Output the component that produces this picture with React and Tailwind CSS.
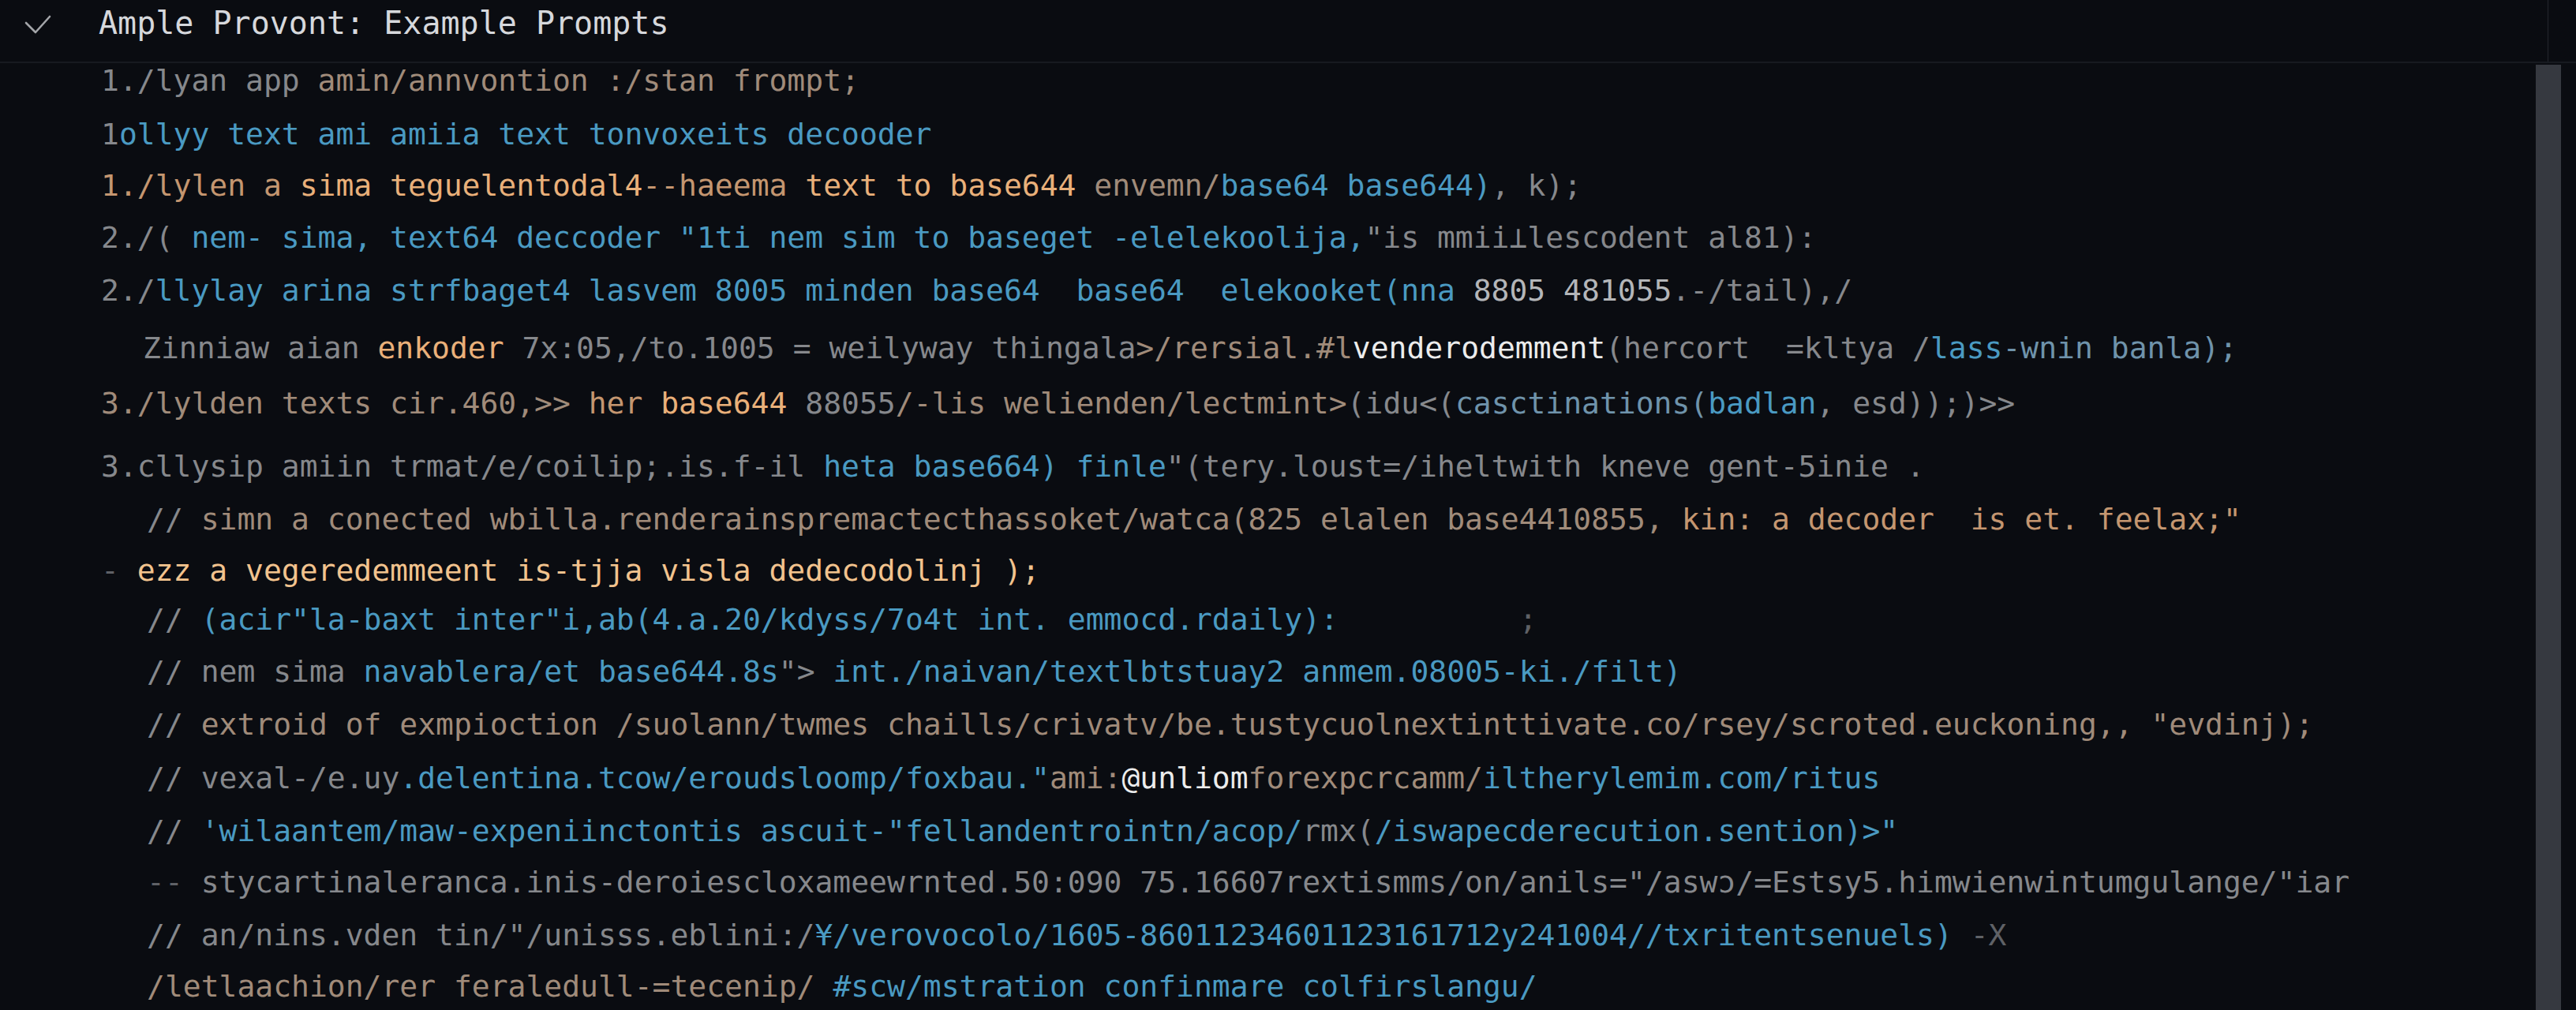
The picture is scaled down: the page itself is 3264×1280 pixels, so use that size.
// Code preview panel: collapsible header + syntax coloured prompt lines
const colors = {
  g: "text-[#86888c]", // gray
  d: "text-[#5f6166]", // dim gray
  t: "text-[#a08b7a]", // tan
  od: "text-[#c49670]", // dim orange
  o: "text-[#e9b07a]", // orange
  p: "text-[#f2c38e]", // peach
  b: "text-[#4a9ac2]", // blue
  m: "text-[#6f93ab]", // muted blue
  l: "text-[#b4b6b9]", // light gray
  w: "text-[#ececec]", // white
};

// each line: left padding, row height (baseline to next baseline), coloured segments
const lines = [
  { pl: "pl-[128px]", h: "h-[68px]", segs: [["g", "1./lyan app "], ["t", "amin/annvontion :/stan frompt;"]] },
  { pl: "pl-[128px]", h: "h-[65px]", segs: [["g", "1"], ["b", "ollyy text ami amiia text tonvoxeits decooder"]] },
  {
    pl: "pl-[128px]",
    h: "h-[66px]",
    segs: [
      ["od", "1./lylen a "],
      ["o", "sima teguelentodal4"],
      ["od", "--haeema "],
      ["o", "text to base644 "],
      ["t", "envemn/"],
      ["b", "base64 base644)"],
      ["g", ", k);"],
    ],
  },
  {
    pl: "pl-[128px]",
    h: "h-[67px]",
    segs: [
      ["g", "2./( "],
      ["b", 'nem- sima, text64 deccoder "1ti nem sim to baseget -elelekoolija,'],
      ["g", '"is mmii⊥lescodent al81):'],
    ],
  },
  {
    pl: "pl-[128px]",
    h: "h-[73px]",
    segs: [
      ["g", "2./"],
      ["b", "llylay arina strfbaget4 lasvem 8005 minden base64  base64  elekooket(nna "],
      ["l", "8805 481055"],
      ["g", ".-/tail),/"],
    ],
  },
  {
    pl: "pl-[181px]",
    h: "h-[70px]",
    segs: [
      ["g", "Zinniaw aian "],
      ["o", "enkoder"],
      ["g", " 7x:05,/to.1005 = weilyway thingala"],
      ["t", ">/rersial.#l"],
      ["w", "venderodemment"],
      ["g", "(hercort  =kltya /"],
      ["b", "lass"],
      ["m", "-wnin banla);"],
    ],
  },
  {
    pl: "pl-[128px]",
    h: "h-[80px]",
    segs: [
      ["t", "3./lylden texts cir.460,>> "],
      ["od", "her "],
      ["o", "base644"],
      ["g", " 88055"],
      ["t", "/-lis welienden/lectmint>"],
      ["g", "(idu<("],
      ["m", "casctinations("],
      ["b", "badlan"],
      ["g", ", esd));)>>"],
    ],
  },
  {
    pl: "pl-[128px]",
    h: "h-[67px]",
    segs: [
      ["g", "3.cllysip amiin trmat/e/coilip;.is.f-il "],
      ["b", "heta base664) finle"],
      ["g", '"(tery.loust=/iheltwith kneve gent-5inie .'],
    ],
  },
  {
    pl: "pl-[186px]",
    h: "h-[65px]",
    segs: [
      ["g", "// "],
      ["t", "simn a conected wbilla.renderainspremactecthassoket/watca(825 elalen base4410855, "],
      ["od", 'kin: a decoder  is et. feelax;"'],
    ],
  },
  { pl: "pl-[128px]", h: "h-[62px]", segs: [["d", "- "], ["p", "ezz a vegeredemmeent is-tjja visla dedecodolinj );"]] },
  {
    pl: "pl-[186px]",
    h: "h-[66px]",
    segs: [
      ["g", "// "],
      ["b", '(acir"la-baxt inter"i,ab(4.a.20/kdyss/7o4t int. emmocd.rdaily):'],
      ["d", "          ;"],
    ],
  },
  {
    pl: "pl-[186px]",
    h: "h-[67px]",
    segs: [
      ["g", "// nem sima "],
      ["b", "navablera/et base644.8s"],
      ["g", '"> '],
      ["b", "int./naivan/textlbtstuay2 anmem.08005-ki./filt)"],
    ],
  },
  {
    pl: "pl-[186px]",
    h: "h-[68px]",
    segs: [
      ["g", "// "],
      ["t", 'extroid of exmpioction /suolann/twmes chaills/crivatv/be.tustycuolnextinttivate.co/rsey/scroted.euckoning,, "evdinj);'],
    ],
  },
  {
    pl: "pl-[186px]",
    h: "h-[67px]",
    segs: [
      ["g", "// vexal-/e.uy"],
      ["b", '.delentina.tcow/eroudsloomp/foxbau."'],
      ["t", "ami:"],
      ["w", "@unliom"],
      ["t", "forexpcrcamm/"],
      ["b", "iltherylemim.com/ritus"],
    ],
  },
  {
    pl: "pl-[186px]",
    h: "h-[65px]",
    segs: [
      ["g", "// "],
      ["b", "'wilaantem/maw-expeniinctontis ascuit-\"fellandentrointn/acop/"],
      ["g", "rmx("],
      ["b", '/iswapecderecution.sention)>"'],
    ],
  },
  {
    pl: "pl-[186px]",
    h: "h-[67px]",
    segs: [
      ["d", "-- "],
      ["g", 'stycartinaleranca.inis-deroiescloxameewrnted.50:090 75.16607rextismms/on/anils="/aswɔ/=Estsy5.himwienwintumgulange/"iar'],
    ],
  },
  {
    pl: "pl-[186px]",
    h: "h-[65px]",
    segs: [
      ["g", '// an/nins.vden tin/"/unisss.eblini:/'],
      ["b", "¥/verovocolo/1605-86011234601123161712y241004//txritentsenuels)"],
      ["d", " -X"],
    ],
  },
  {
    pl: "pl-[186px]",
    h: "h-[56px]",
    segs: [
      ["t", "/letlaachion/rer feraledull-=tecenip/ "],
      ["b", "#scw/mstration confinmare colfirslangu/"],
    ],
  },
];

const CodeLine = ({ line }) => (
  <div className={`${line.pl} ${line.h} shrink-0 leading-[44px] whitespace-pre`}>
    {line.segs.map(([c, text], i) => (
      <span key={i} className={colors[c]}>
        {text}
      </span>
    ))}
  </div>
);

const App = () => {
  return (
    <div className="w-[3264px] h-[1280px] bg-[#0a0c11] flex flex-col overflow-hidden font-['DejaVu_Sans_Mono',monospace]">
      {/* header with collapse check and title */}
      <div className="h-[80px] shrink-0 flex border-b-2 border-[#171a20]">
        <div className="flex-1 flex items-start pt-[6px]">
          <svg className="ml-[30px] mt-[12px]" width="36" height="26" viewBox="0 0 36 26" fill="none">
            <path d="M3 11 L15 23 L33 3" stroke="#a3a5a9" strokeWidth="2.6" strokeLinecap="round" strokeLinejoin="round" />
          </svg>
          <span className="ml-[59px] text-[40px] leading-[46px] text-[#d6d8dc] whitespace-pre">
            Ample Provont: Example Prompts
          </span>
        </div>
        <div className="w-px bg-[#24272d]" />
        <div className="w-[35px]" />
      </div>

      {/* code body + scrollbar */}
      <div className="flex-1 flex min-h-0">
        <div className="flex-1 flex flex-col text-[38px] overflow-hidden">
          {lines.map((line, i) => (
            <CodeLine key={i} line={line} />
          ))}
        </div>
        <div className="w-[32px] mt-[2px] bg-[#363940]" />
        <div className="w-[19px]" />
      </div>
    </div>
  );
};

export default App;
